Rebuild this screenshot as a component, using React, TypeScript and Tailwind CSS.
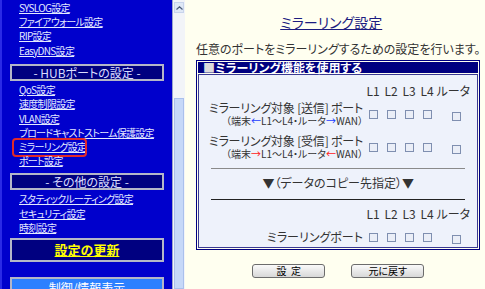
const jp = "font-['Noto_Sans_CJK_JP','Noto_Sans',sans-serif] [font-feature-settings:'palt']";

const linksTop = ['SYSLOG設定', 'ファイアウォール設定', 'RIP設定', 'EasyDNS設定'];
const linksHub = ['QoS設定', '速度制限設定', 'VLAN設定', 'ブロードキャストストーム保護設定', 'ミラーリング設定', 'ポート設定'];
const linksOther = ['スタティックルーティング設定', 'セキュリティ設定', '時刻設定'];

const NavLink = ({ label, active }: { label: string; active?: boolean }) => (
  <div className="h-[14.2px] pl-[17px] text-[10px] leading-[14.2px] tracking-[-0.7px]">
    <a className="relative inline-block h-[14.2px] text-[#e4eaff] underline underline-offset-[1px]">
      {label}
      {active && (
        <span className="absolute left-[-7px] right-[-1px] top-[-2px] bottom-[-3px] rounded-[4px] border-2 border-[#e02a2a]" />
      )}
    </a>
  </div>
);

const Section = ({ label }: { label: string }) => (
  <div className="ml-[8px] h-[17px] w-[154px] border-2 border-[#b4b6c8] bg-[#000080] text-center text-[12px] leading-[13px] text-[#dadcff]">
    {label}
  </div>
);

const Nav = () => (
  <div className="w-[172px] shrink-0 border-l-2 border-[#2a2ae6] bg-[#0000cc] pt-[1px]">
    {linksTop.map((l) => <NavLink key={l} label={l} />)}
    <div className="mt-[6px]">
      <Section label="- HUBポートの設定 -" />
    </div>
    <div className="mt-[2.5px]">
      {linksHub.map((l) => <NavLink key={l} label={l} active={l === 'ミラーリング設定'} />)}
    </div>
    <div className="mt-[5px]">
      <Section label="- その他の設定 -" />
    </div>
    <div className="mt-[2px]">
      {linksOther.map((l) => <NavLink key={l} label={l} />)}
    </div>
    <div className="ml-[8px] mt-[3px] flex h-[24px] w-[154px] items-center justify-center border-2 border-[#b4b6c8] bg-[#000080]">
      <span className="text-[13px] font-bold leading-[16px] text-[#ffff00] underline">設定の更新</span>
    </div>
    <div className="ml-[8px] mt-[15px] h-[24px] w-[154px] border-2 border-[#b4b6c8] bg-[#2c80ff] text-center text-[12px] leading-[18px] text-white">
      制御/情報表示
    </div>
  </div>
);

const Scrollbar = () => (
  <div className="flex w-[13px] shrink-0 flex-col border-l border-[#9aa6cc] bg-[#f2f4f8]">
    <div className="mx-[1px] mt-[2px] flex h-[11px] items-center justify-center border border-[#c8d4ec] bg-[#dfe8f6]">
      <svg width="7" height="4" viewBox="0 0 7 4">
        <path d="M0.5 3.5 L3.5 0.8 L6.5 3.5" fill="none" stroke="#4a5a78" strokeWidth="1.2" />
      </svg>
    </div>
    <div className="mx-[1px] mt-[85px] flex-1 border border-[#aac0ec] bg-[#c6d8f8]" />
  </div>
);

const Box = () => <span className="inline-block h-[9px] w-[9px] border border-[#7f8fb0] bg-[#eaeef7]" />;

const BoxCells = () => (
  <>
    <div className="flex justify-center"><Box /></div>
    <div className="flex justify-center"><Box /></div>
    <div className="flex justify-center"><Box /></div>
    <div className="flex justify-center"><Box /></div>
    <div className="pl-[16px]"><Box /></div>
  </>
);

const HeadRow = () => (
  <div className="grid h-[14px] grid-cols-[165px_18px_18px_18px_18px_1fr] text-[12px] leading-[14px]">
    <div />
    <div className="text-center">L1</div>
    <div className="text-center">L2</div>
    <div className="text-center">L3</div>
    <div className="text-center">L4</div>
    <div className="ml-[0.5px] whitespace-nowrap">ルータ</div>
  </div>
);

const TargetRow = ({ kind, left, right, arrow }: { kind: string; left: string; right: string; arrow: string }) => (
  <div className="grid grid-cols-[165px_18px_18px_18px_18px_1fr] items-center">
    <div className="pr-[1px] text-right">
      <div className="h-[13px] whitespace-nowrap text-[12px] leading-[13px] tracking-[-0.2px]">ミラーリング対象 [{kind}] ポート</div>
      <div className="h-[13px] whitespace-nowrap text-[10px] leading-[13px]">
        （端末<span className={arrow}>{left}</span>L1～L4・ルータ<span className={arrow}>{right}</span>WAN）
      </div>
    </div>
    <BoxCells />
  </div>
);

const Main = () => (
  <div className="flex-1 bg-[#fffff0] pl-[11px] pr-[7px] text-[#333333]">
    <div className="h-[27px] pr-[14px] pt-[9px] text-center">
      <span className="text-[14px] leading-[16px] text-[#1c1c80] underline">ミラーリング設定</span>
    </div>
    <p className="mt-[14px] h-[15px] whitespace-nowrap text-[12px] leading-[15px]">
      任意のポートをミラーリングするための設定を行います。
    </p>
    <div className="mt-[4px] border border-[#000080] p-[1px]">
      <div className="h-[11px] bg-[#000080] pl-[5px] text-[12px] font-bold leading-[11px] text-white">
        <span className="text-[#dcdcdc]">■</span>ミラーリング機能を使用する
      </div>
      <div className="mt-[1px] border border-[#3a3a92] bg-[#eef2fb] pb-[8px] pt-[9px]">
        <HeadRow />
        <div className="mt-[3px]">
          <TargetRow kind="送信" left="←" right="→" arrow="text-[#1a3cff]" />
        </div>
        <div className="mt-[7px]">
          <TargetRow kind="受信" left="→" right="←" arrow="text-[#ff2020]" />
        </div>
        <div className="mx-[12px] mt-[8px] h-px bg-[#8a8a8a]" />
        <div className="mt-[7px] h-[14px] text-center text-[12px] leading-[14px]">▼（データのコピー先指定）▼</div>
        <div className="mx-[12px] mt-[9px] h-px bg-[#222222]" />
        <div className="mt-[7px]">
          <HeadRow />
        </div>
        <div className="mt-[4px] grid h-[14px] grid-cols-[165px_18px_18px_18px_18px_1fr] items-center">
          <div className="pr-[1px] text-right text-[12px] leading-[14px]">ミラーリングポート</div>
          <BoxCells />
        </div>
      </div>
    </div>
    <div className="mt-[14px] flex justify-center gap-[26px]">
      <button className="h-[14px] w-[73px] rounded-[3px] border border-[#6c6c6c] bg-gradient-to-b from-[#fafafa] to-[#d8d8d8] text-[10px] leading-[12px] text-black">
        設&nbsp;&nbsp;定
      </button>
      <button className="h-[14px] w-[73px] rounded-[3px] border border-[#6c6c6c] bg-gradient-to-b from-[#fafafa] to-[#d8d8d8] text-[10px] leading-[12px] text-black">
        元に戻す
      </button>
    </div>
  </div>
);

export default function App() {
  return (
    <div className={`flex h-[289px] w-[485px] overflow-hidden ${jp}`}>
      <Nav />
      <Scrollbar />
      <Main />
    </div>
  );
}
